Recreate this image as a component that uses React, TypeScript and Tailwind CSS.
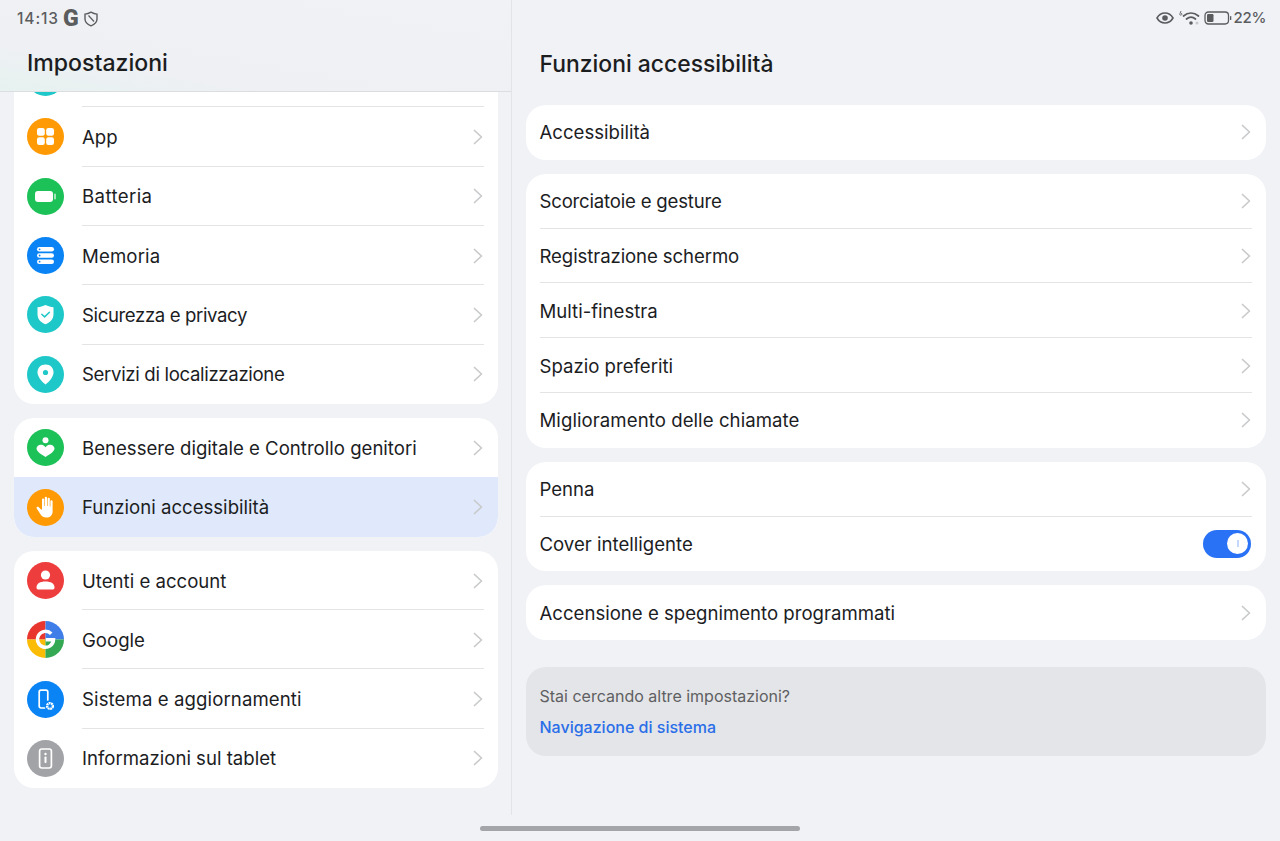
import React from "react";

const Chevron = () => (
  <svg width="12" height="18" viewBox="0 0 12 18" fill="none" className="shrink-0">
    <path d="M2.5 2.5 L9.5 9 L2.5 15.5" stroke="#c9cacc" strokeWidth="1.7" strokeLinecap="round" strokeLinejoin="round" />
  </svg>
);

const W = "#ffffff";
const Ico = ({ bg, children }: { bg: string; children: React.ReactNode }) => (
  <svg width="37" height="37" viewBox="0 0 37 37" className="shrink-0">
    <circle cx="18.5" cy="18.5" r="18.5" fill={bg} />
    {children}
  </svg>
);

const icons: Record<string, React.ReactNode> = {
  loc0: <Ico bg="#1fc8c8"><></></Ico>,
  app: (
    <Ico bg="#ff9a05">
      <rect x="10" y="10" width="7.8" height="7.8" rx="2.2" fill={W} />
      <rect x="19.2" y="10" width="7.8" height="7.8" rx="2.2" fill={W} />
      <rect x="10" y="19.2" width="7.8" height="7.8" rx="2.2" fill={W} />
      <rect x="19.2" y="19.2" width="7.8" height="7.8" rx="2.2" fill={W} />
    </Ico>
  ),
  bat: (
    <Ico bg="#1cc158">
      <rect x="8" y="13" width="18" height="11" rx="3" fill={W} />
      <rect x="27" y="15.5" width="2" height="6" rx="1" fill={W} opacity="0.6" />
    </Ico>
  ),
  mem: (
    <Ico bg="#0a84f5">
      <rect x="10" y="10" width="17" height="4.6" rx="2.3" fill={W} />
      <rect x="10" y="16.2" width="17" height="4.6" rx="2.3" fill={W} />
      <rect x="10" y="22.4" width="17" height="4.6" rx="2.3" fill={W} />
      <circle cx="12.6" cy="12.3" r="0.9" fill="#0a84f5" />
      <circle cx="12.6" cy="18.5" r="0.9" fill="#0a84f5" />
      <circle cx="12.6" cy="24.7" r="0.9" fill="#0a84f5" />
    </Ico>
  ),
  sec: (
    <Ico bg="#1fc8c8">
      <path d="M18.5 9 C21 10.3 24 11 26.5 11.2 V18 C26.5 23 23.5 26.3 18.5 28.2 C13.5 26.3 10.5 23 10.5 18 V11.2 C13 11 16 10.3 18.5 9 Z" fill={W} />
      <path d="M14.8 18.3 L17.6 20.9 L22.4 16.2" stroke="#1fc8c8" strokeWidth="1.5" fill="none" strokeLinecap="round" strokeLinejoin="round" />
    </Ico>
  ),
  loc: (
    <Ico bg="#1fc8c8">
      <path d="M18.5 8.5 C23.5 8.5 26.5 12 26.5 16.2 C26.5 20.5 22.5 25.5 18.5 28.5 C14.5 25.5 10.5 20.5 10.5 16.2 C10.5 12 13.5 8.5 18.5 8.5 Z" fill={W} />
      <circle cx="18.5" cy="16.5" r="2.6" fill="#1fc8c8" />
    </Ico>
  ),
  well: (
    <Ico bg="#1cc158">
      <circle cx="18.5" cy="11.2" r="3" fill={W} />
      <path d="M18.5 18.2 C20 16.3 21.6 15.7 23.2 15.7 C25.8 15.7 27.5 17.6 27.5 19.6 C27.5 22.2 23.5 25.2 18.5 28 C13.5 25.2 9.5 22.2 9.5 19.6 C9.5 17.6 11.2 15.7 13.8 15.7 C15.4 15.7 17 16.3 18.5 18.2 Z" fill={W} />
    </Ico>
  ),
  hand: (
    <Ico bg="#ff9a05">
      <path d="M15 10.5 a1.1 1.1 0 0 1 2.2 0 V17 h0.6 V8.8 a1.1 1.1 0 0 1 2.2 0 V17 h0.6 V9.8 a1.1 1.1 0 0 1 2.2 0 V17.5 h0.6 V12.3 a1.1 1.1 0 0 1 2.2 0 V22 C25.8 26 23 28.5 19.5 28.5 C16.2 28.5 14.5 27 13 24.5 L9.7 19.4 C9 18.2 10.6 17 11.6 18 L14 20.4 H15 Z" fill={W} />
    </Ico>
  ),
  user: (
    <Ico bg="#ee3d3d">
      <circle cx="18.5" cy="13" r="4.6" fill={W} />
      <path d="M9.5 25.5 C9.5 21.5 13 19.5 18.5 19.5 C24 19.5 27.5 21.5 27.5 25.5 C27.5 27 26.5 27.5 25.5 27.5 H11.5 C10.5 27.5 9.5 27 9.5 25.5 Z" fill={W} />
    </Ico>
  ),
  google: (
    <Ico bg="#fff">
      <path d="M18.5 18.5 L18.5 0 A18.5 18.5 0 0 0 0 18.5 Z" fill="#e8352e" />
      <path d="M18.5 18.5 L18.5 0 A18.5 18.5 0 0 1 37 18.5 Z" fill="#3f7ee8" />
      <path d="M18.5 18.5 L0 18.5 A18.5 18.5 0 0 0 18.5 37 Z" fill="#fbbc05" />
      <path d="M18.5 18.5 L37 18.5 A18.5 18.5 0 0 1 18.5 37 Z" fill="#34a853" />
      <path d="M24.2 12.7 A 8 8 0 1 0 26.5 18.7 H18.8" fill="none" stroke={W} strokeWidth="3.5" />
    </Ico>
  ),
  sys: (
    <Ico bg="#0a84f5">
      <path d="M17.5 27 H14 a1.8 1.8 0 0 1 -1.8 -1.8 V11 a1.8 1.8 0 0 1 1.8 -1.8 H19 a1.8 1.8 0 0 1 1.8 1.8 V19" fill="none" stroke={W} strokeWidth="1.7" strokeLinecap="round" />
      <circle cx="23" cy="25" r="2.9" fill="none" stroke={W} strokeWidth="2.4" strokeDasharray="1.9 0.5" />
    </Ico>
  ),
  info: (
    <Ico bg="#a2a3a7">
      <rect x="12.6" y="9" width="11.8" height="19" rx="2.2" fill="none" stroke={W} strokeWidth="1.7" />
      <circle cx="18.5" cy="14" r="1.2" fill={W} />
      <rect x="17.5" y="16.5" width="2" height="6.5" rx="0.8" fill={W} />
    </Ico>
  ),
};

const Row = ({ icon, label, line = true, active = false, h = "h-[59.33px]", rounded = "", track = "" }: { icon: string; label: string; line?: boolean; active?: boolean; h?: string; rounded?: string; track?: string }) => (
  <div className={`relative flex items-center pl-[13px] pr-[14px] ${h} ${rounded} ${active ? "bg-[#dfe9fb]" : ""}`}>
    {icons[icon]}
    <span className={`ml-[18px] pt-[2px] flex-1 text-[18.6px] text-[#1c1d1f] ${track}`}>{label}</span>
    <Chevron />
    {line && <div className="absolute left-[68px] right-[14px] bottom-0 h-px bg-[#e3e4e6]" />}
  </div>
);

const RRow = ({ label, line = true, track = "" }: { label: string; line?: boolean; track?: string }) => (
  <div className="relative flex items-center justify-between pl-[13.5px] pr-[14px] h-[54.8px]">
    <span className={`pt-[2px] text-[18.6px] text-[#1c1d1f] ${track}`}>{label}</span>
    <Chevron />
    {line && <div className="absolute left-[13.5px] right-[14px] bottom-0 h-px bg-[#e3e4e6]" />}
  </div>
);

export default function App() {
  return (
    <div className="w-[1280px] h-[841px] overflow-hidden bg-[#f0f2f6] flex flex-col font-['Inter','Roboto',sans-serif]">
      <div className="flex h-[815px]">
        {/* Left pane */}
        <div className="w-[512px] shrink-0 border-r border-[#e3e4e7] flex flex-col">
          <div className="h-[92px] shrink-0 relative z-10 border-b border-[#dcdde0] bg-gradient-to-tr from-[#e6f2f0] from-0% via-[#eef0f3] via-25% to-[#f0f2f6]">
            <div className="h-[37px] pl-[17px] flex items-center text-[15.5px] font-medium text-[#5b5c5e] tracking-[0.9px]">
              <span>14:13</span>
              <span className="ml-[4px] text-[23px] font-black leading-none tracking-normal font-['Roboto',sans-serif]">G</span>
              <svg width="14" height="16" viewBox="0 0 14 16" fill="none" className="ml-[5px]">
                <path d="M7 1.2 C9 2.4 10.8 3 13 3.1 V8 C13 11 10.5 13.5 7 14.8 C3.5 13.5 1 11 1 8 V3.1 C3.2 3 5 2.4 7 1.2 Z" stroke="#5b5c5e" strokeWidth="1.4" />
                <path d="M4.5 4.5 L10 10.5" stroke="#5b5c5e" strokeWidth="1.2" />
              </svg>
            </div>
            <h1 className="pl-[27px] mt-[9px] text-[23.1px] leading-[34px] font-medium text-[#1c1d1f]">Impostazioni</h1>
          </div>
          <div className="flex-1 overflow-hidden pl-[14px] pr-[13px]">
            <div className="-mt-[44px] flex flex-col gap-[14px]">
              <div className="bg-white rounded-[20px] overflow-hidden">
                <Row icon="loc0" label="" />
                <Row icon="app" label="App" />
                <Row icon="bat" label="Batteria" track="tracking-[0.4px]" />
                <Row icon="mem" label="Memoria" track="tracking-[0.15px]" />
                <Row icon="sec" label="Sicurezza e privacy" track="tracking-[-0.38px]" />
                <Row icon="loc" label="Servizi di localizzazione" line={false} track="tracking-[-0.33px]" />
              </div>
              <div className="bg-white rounded-[20px] overflow-hidden">
                <Row icon="well" label="Benessere digitale e Controllo genitori" line={false} h="h-[59.5px]" />
                <Row icon="hand" label="Funzioni accessibilità" line={false} active h="h-[59.5px]" rounded="rounded-b-[20px]" />
              </div>
              <div className="bg-white rounded-[20px] overflow-hidden">
                <Row icon="user" label="Utenti e account" h="h-[59.25px]" />
                <Row icon="google" label="Google" h="h-[59.25px]" />
                <Row icon="sys" label="Sistema e aggiornamenti" h="h-[59.25px]" track="tracking-[0.1px]" />
                <Row icon="info" label="Informazioni sul tablet" line={false} h="h-[59.25px]" />
              </div>
            </div>
          </div>
        </div>

        {/* Right pane */}
        <div className="flex-1 flex flex-col px-[14px]">
          <div className="h-[36px] flex items-center justify-end text-[#5b5c5e]">
            <svg width="18" height="12" viewBox="0 0 18 12" fill="none">
              <path d="M1 6 C3 2.5 6 1 9 1 C12 1 15 2.5 17 6 C15 9.5 12 11 9 11 C6 11 3 9.5 1 6 Z" stroke="#5b5c5e" strokeWidth="1.6" />
              <circle cx="9" cy="6" r="2.8" fill="#5b5c5e" />
            </svg>
            <svg width="22" height="16" viewBox="0 0 22 16" fill="none" className="ml-[5px]">
              <path d="M4.5 6 C9 2 15 2 19.5 6" stroke="#5b5c5e" strokeWidth="1.7" strokeLinecap="round" />
              <path d="M7.5 9 C10.5 6.5 13.5 6.5 16.5 9" stroke="#5b5c5e" strokeWidth="1.7" strokeLinecap="round" />
              <circle cx="12" cy="13" r="1.8" fill="#5b5c5e" />
              <circle cx="18" cy="13" r="1.5" fill="#c9cacc" />
              <path d="M2 1 L1 3.6 a1 1 0 1 0 1 -0.4" stroke="#5b5c5e" strokeWidth="0.9" />
            </svg>
            <svg width="28" height="16" viewBox="0 0 28 16" fill="none" className="ml-[3px]">
              <rect x="1" y="2" width="23.5" height="12" rx="3.4" stroke="#5b5c5e" strokeWidth="1.3" />
              <rect x="3" y="4" width="6.5" height="8" rx="1.2" fill="#5b5c5e" />
              <rect x="26" y="6" width="1.3" height="4" rx="0.6" fill="#5b5c5e" />
            </svg>
            <span className="ml-[2px] text-[15px] font-medium tracking-[-0.3px]">22%</span>
          </div>
          <h2 className="pl-[13.5px] mt-[10px] h-[59px] text-[22.9px] leading-[36px] font-medium text-[#1c1d1f]">Funzioni accessibilità</h2>
          <div className="flex flex-col gap-[14px]">
            <div className="bg-white rounded-[20px]">
              <RRow label="Accessibilità" line={false} />
            </div>
            <div className="bg-white rounded-[20px]">
              <RRow label="Scorciatoie e gesture" track="tracking-[-0.2px]" />
              <RRow label="Registrazione schermo" track="tracking-[-0.1px]" />
              <RRow label="Multi-finestra" />
              <RRow label="Spazio preferiti" />
              <RRow label="Miglioramento delle chiamate" track="tracking-[0.07px]" line={false} />
            </div>
            <div className="bg-white rounded-[20px]">
              <RRow label="Penna" />
              <div className="flex items-center justify-between pl-[13.5px] pr-[15px] h-[54.8px]">
                <span className="pt-[2px] text-[18.6px] text-[#1c1d1f]">Cover intelligente</span>
                <div className="w-[48px] h-[28px] rounded-full bg-[#2a72f5] flex items-center justify-end pr-[3px]">
                  <div className="w-[21px] h-[21px] rounded-full bg-white flex items-center justify-center">
                    <div className="w-[2px] h-[7px] bg-[#c5d8fb]" />
                  </div>
                </div>
              </div>
            </div>
            <div className="bg-white rounded-[20px]">
              <RRow label="Accensione e spegnimento programmati" line={false} />
            </div>
          </div>
          <div className="mt-[27px] h-[89px] rounded-[20px] bg-[#e4e5e8] pl-[13.5px] pt-[17px]">
            <div className="text-[16px] leading-[24px] text-[#5e5f62]">Stai cercando altre impostazioni?</div>
            <div className="mt-[7px] text-[16px] leading-[24px] font-medium text-[#2a6ee8]">Navigazione di sistema</div>
          </div>
        </div>
      </div>
      <div className="flex justify-center pt-[11px]">
        <div className="w-[320px] h-[5px] rounded-full bg-[#a4a5a8]" />
      </div>
    </div>
  );
}
